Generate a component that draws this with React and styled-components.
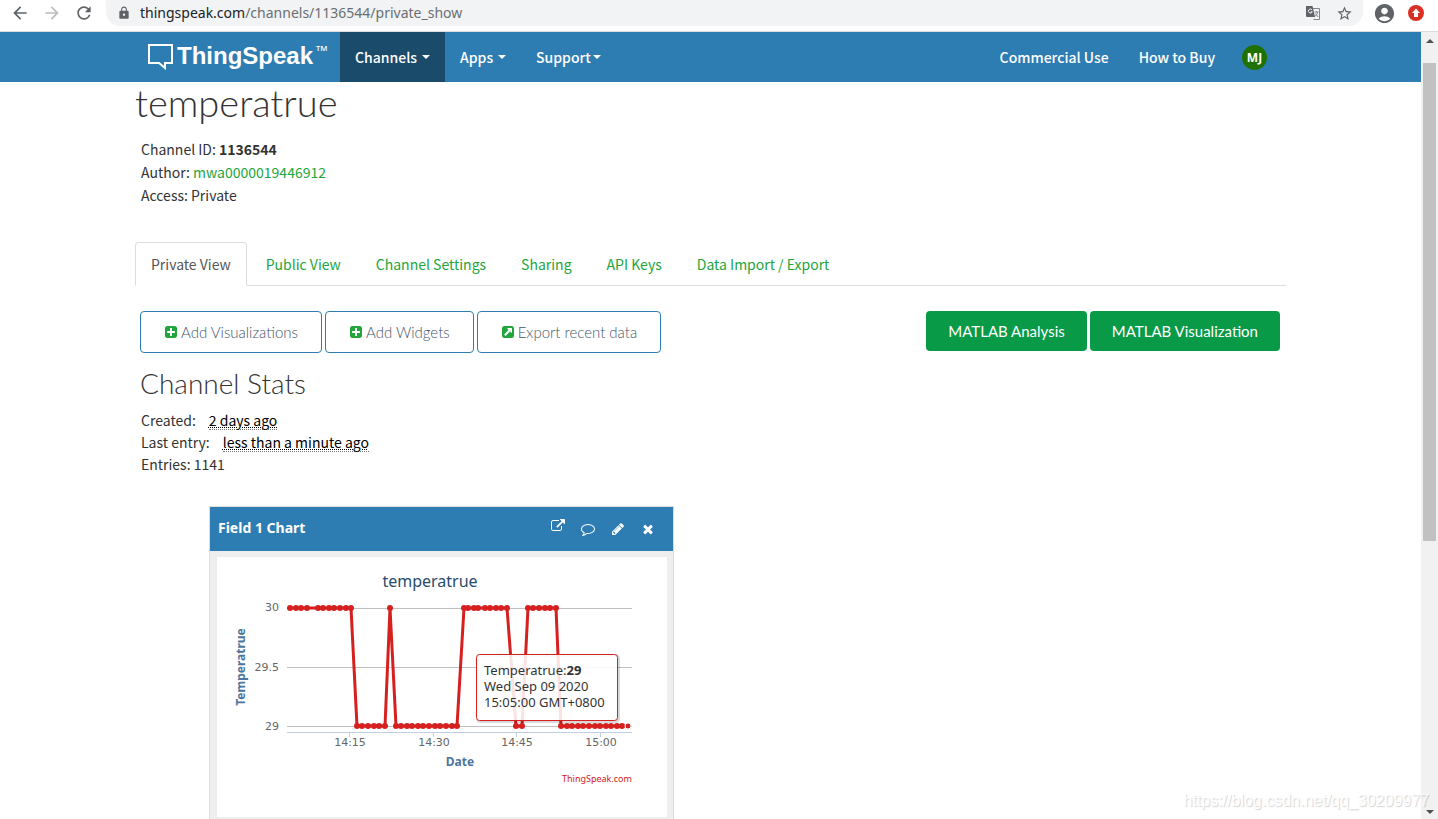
import React from "react";
import styled, { createGlobalStyle } from "styled-components";
import {
  MdAccountCircle,
  MdArrowBack,
  MdArrowForward,
  MdLock,
  MdRefresh,
  MdStarBorder,
} from "react-icons/md";

const GlobalStyle = createGlobalStyle`
  * {
    box-sizing: border-box;
  }
  body {
    margin: 0;
    background: #fff;
    color: #333;
    font-family: "Noto Sans CJK SC", "Noto Sans", sans-serif;
    font-size: 14px;
    line-height: 22px;
    overflow: hidden;
  }
  a {
    text-decoration: none;
  }
  button {
    border: 0;
    padding: 0;
    background: none;
    font: inherit;
    cursor: pointer;
  }
`;

const Shell = styled.div`
  position: relative;
  display: flex;
  flex-direction: column;
  height: 100vh;
`;

/* browser bar */
const Toolbar = styled.div`
  display: flex;
  align-items: center;
  flex: none;
  height: 32px;
  padding: 0 14px 5px 10px;
  border-bottom: 1px solid #dadce0;
`;

const ToolButton = styled.button`
  display: flex;
  margin-right: 12px;
  font-size: 20px;
  color: ${(props) => (props.$muted ? "#babcbe" : "#5f6368")};
`;

const AddressBar = styled.div`
  display: flex;
  align-items: center;
  flex: 1;
  align-self: stretch;
  gap: 9px;
  padding: 0 10px 0 11px;
  border-radius: 0 0 14px 14px;
  background: #f1f3f4;
  color: #5f6368;
`;

const Address = styled.div`
  flex: 1;
  font-family: "Noto Sans", sans-serif;
  font-size: 14px;
  color: #6b6f73;
  b {
    font-weight: 400;
    color: #202124;
  }
`;

const AddressIcons = styled.div`
  display: flex;
  align-items: center;
  gap: 15px;
`;

const Profile = styled.div`
  display: flex;
  align-items: center;
  gap: 12px;
  margin-left: 10px;
  color: #5f6368;
`;

const Viewport = styled.div`
  display: flex;
  flex: 1;
  min-height: 0;
`;

const Page = styled.div`
  flex: 1;
  min-width: 0;
  overflow: hidden;
`;

const ScrollBar = styled.div`
  display: flex;
  flex-direction: column;
  align-items: center;
  justify-content: space-between;
  width: 17px;
  padding: 7px 0 5px;
  background: #f1f1f1;
`;

const Track = styled.div`
  flex: 1;
  width: 13px;
  padding-top: 20px;
`;

const Thumb = styled.div`
  width: 13px;
  height: 64%;
  background: #c1c1c1;
`;

const ScrollArrow = styled.div`
  border: 4px solid transparent;
  border-top-width: ${(props) => (props.$down ? "4px" : "0")};
  border-bottom-width: ${(props) => (props.$down ? "0" : "4px")};
  border-${(props) => (props.$down ? "top" : "bottom")}-color: #505050;
`;

/* site header */
const Container = styled.div`
  width: 100%;
  max-width: 1151px;
  margin: 0 auto;
`;

const NavBar = styled.nav`
  background: #2e7db2;
`;

const NavInner = styled(Container)`
  display: flex;
  align-items: center;
  height: 50px;
  padding: 0 19px 0 13px;
`;

const Brand = styled.a`
  display: flex;
  align-items: center;
  gap: 4px;
  width: 192px;
  color: #fff;
  font: bold 24px/26px "Liberation Sans", Arial, sans-serif;
  span {
    display: flex;
    align-items: flex-start;
    gap: 2px;
    padding-bottom: 2px;
  }
  sup {
    font-size: 13px;
    font-weight: 400;
    line-height: 16px;
    vertical-align: baseline;
  }
`;

const NavLink = styled.a`
  display: flex;
  align-items: center;
  gap: ${(props) => props.$gap || "5px"};
  height: 50px;
  padding: 0 15px;
  background: ${(props) => (props.$active ? "#1b4b6b" : "transparent")};
  color: #fff;
  font-weight: 500;
  white-space: nowrap;
`;

const Caret = styled.i`
  border-top: 4px solid #fff;
  border-left: 4px solid transparent;
  border-right: 4px solid transparent;
`;

const NavRight = styled.div`
  display: flex;
  align-items: center;
  margin-left: auto;
`;

const Avatar = styled.button`
  width: 25px;
  height: 25px;
  margin-left: 12px;
  border-radius: 50%;
  background: #1f7100;
  color: #fff;
  font: bold 12px/25px "Noto Sans", sans-serif;
`;

/* channel */
const Title = styled.h1`
  margin: 0;
  font: 300 38px/40px Lato, sans-serif;
`;

const Meta = styled.div`
  padding: 16px 6px 0;
  line-height: 23px;
  p {
    margin: 0;
  }
  a {
    color: #22a63c;
  }
`;

const Tabs = styled.div`
  display: flex;
  gap: 3px;
  height: 44px;
  margin: 35px 0 25px;
  border-bottom: 1px solid #ddd;
`;

const Tab = styled.a`
  height: 44px;
  padding: 0 15px;
  border: 1px solid ${(props) => (props.$active ? "#ddd" : "transparent")};
  border-bottom-color: ${(props) => (props.$active ? "#fff" : "transparent")};
  border-radius: 4px 4px 0 0;
  color: ${(props) => (props.$active ? "#555" : "#22a63c")};
  line-height: 43px;
  white-space: nowrap;
`;

const Actions = styled.div`
  display: flex;
  align-items: flex-start;
  gap: 3px;
  padding: 0 6px 0 5px;
`;

const OutlineButton = styled.button`
  display: flex;
  align-items: center;
  gap: 3px;
  height: 42px;
  padding: 0 23px;
  border: 1px solid #2e7db2;
  border-radius: 4px;
  background: #fff;
  color: #46566b;
  font: 300 15px/20px Lato, sans-serif;
  white-space: nowrap;
  svg {
    fill: #22a63c;
  }
`;

const GreenButton = styled.button`
  height: 40px;
  padding: 0 22px;
  border-radius: 4px;
  background: #089a47;
  color: #fff;
  font: 400 15px/20px Lato, sans-serif;
  white-space: nowrap;
`;

const Spacer = styled.div`
  flex: 1;
`;

const SubTitle = styled.h2`
  margin: 15px 5px 11px;
  font: 300 28px/30px Lato, sans-serif;
`;

const Stats = styled.div`
  padding: 0 6px;
  p {
    display: flex;
    margin: 0;
  }
  abbr {
    height: 21px;
    margin-left: 13px;
    border-bottom: 1px dotted #777;
    color: #000;
    text-decoration: underline dotted 1px;
    text-underline-offset: 1px;
  }
`;

/* chart card */
const Card = styled.section`
  width: 465px;
  margin: 31px 0 0 74px;
  border: 1px solid #ddd;
  background: #eee;
`;

const CardHeader = styled.header`
  display: flex;
  align-items: center;
  gap: 16px;
  height: 44px;
  padding: 0 18px 0 8px;
  background: #2e7db2;
  h3 {
    flex: 1;
    margin: 0;
    padding-bottom: 2px;
    color: #fff;
    font: bold 14px/20px "Noto Sans", sans-serif;
  }
`;

const CardButton = styled.button`
  display: flex;
  padding-bottom: ${(props) => (props.$raised ? "7px" : "0")};
  svg {
    fill: #fff;
  }
`;

const CardBody = styled.div`
  padding: 6px;
  padding-left: 7px;
`;

const Chart = styled.svg`
  display: block;
  background: #fff;
  font-family: "DejaVu Sans", sans-serif;
`;

const Watermark = styled.div`
  position: absolute;
  right: 9px;
  bottom: 8px;
  color: #fff;
  font: 16px/20px "Liberation Sans", Arial, sans-serif;
  text-shadow: 1px 1px 1px rgba(0, 0, 0, 0.25);
  opacity: 0.7;
  pointer-events: none;
`;

const ICONS = {
  plus: "M1408 960v-128q0-26-19-45t-45-19h-320v-320q0-26-19-45t-45-19h-128q-26 0-45 19t-19 45v320h-320q-26 0-45 19t-19 45v128q0 26 19 45t45 19h320v320q0 26 19 45t45 19h128q26 0 45-19t19-45v-320h320q26 0 45-19t19-45zm256-544v960q0 119-84.5 203.5t-203.5 84.5h-960q-119 0-203.5-84.5t-84.5-203.5v-960q0-119 84.5-203.5t203.5-84.5h960q119 0 203.5 84.5t84.5 203.5z",
  exportSquare:
    "M1408 928v-480q0-26-19-45t-45-19h-480q-42 0-59 39-17 41 14 70l144 144-534 534q-19 19-19 45t19 45l102 102q19 19 45 19t45-19l534-534 144 144q18 19 45 19 12 0 25-5 39-17 39-59zm256-512v960q0 119-84.5 203.5t-203.5 84.5h-960q-119 0-203.5-84.5t-84.5-203.5v-960q0-119 84.5-203.5t203.5-84.5h960q119 0 203.5 84.5t84.5 203.5z",
  external:
    "M1408 928v320q0 119-84.5 203.5t-203.5 84.5h-832q-119 0-203.5-84.5t-84.5-203.5v-832q0-119 84.5-203.5t203.5-84.5h704q14 0 23 9t9 23v64q0 14-9 23t-23 9h-704q-66 0-113 47t-47 113v832q0 66 47 113t113 47h832q66 0 113-47t47-113v-320q0-14 9-23t23-9h64q14 0 23 9t9 23zm384-864v512q0 26-19 45t-45 19-45-19l-176-176-652 652q-10 10-23 10t-23-10l-114-114q-10-10-10-23t10-23l652-652-176-176q-19-19-19-45t19-45 45-19h512q26 0 45 19t19 45z",
  comment:
    "M896 384q-204 0-381.5 69.5t-282 187.5-104.5 255q0 112 71.5 213.5t201.5 175.5l87 50-27 96q-24 91-70 172 152-63 275-171l43-38 57 6q69 8 130 8 204 0 381.5-69.5t282-187.5 104.5-255-104.5-255-282-187.5-381.5-69.5zm896 512q0 174-120 321.5t-326 233-450 85.5q-70 0-145-8-198 175-460 242-49 14-114 22h-5q-15 0-27-10.5t-16-27.5v-1q-3-4-.5-12t2-10 4.5-9.5l6-9 7-8.5 8-9q7-8 31-34.5t34.5-38 31-39.5 32.5-51 27-59 26-76q-157-89-247.5-220t-90.5-281q0-174 120-321.5t326-233 450-85.5 450 85.5 326 233 120 321.5z",
  pencil:
    "M491 1536l91-91-235-235-91 91v107h128v128h107zm523-928q0-22-22-22-10 0-17 7l-542 542q-7 7-7 17 0 22 22 22 10 0 17-7l542-542q7-7 7-17zm-54-192l416 416-832 832h-416v-416zm683 96q0 53-37 90l-166 166-416-416 166-165q36-38 90-38 53 0 91 38l235 234q37 39 37 91z",
  times:
    "M1490 1322q0 40-28 68l-136 136q-28 28-68 28t-68-28l-294-294-294 294q-28 28-68 28t-68-28l-136-136q-28-28-28-68t28-68l294-294-294-294q-28-28-28-68t28-68l136-136q28-28 68-28t68 28l294 294 294-294q28-28 68-28t68 28l136 136q28 28 28 68t-28 68l-294 294 294 294q28 28 28 68z",
};

const Icon = ({ name, size = 14 }) => (
  <svg width={size} height={size} viewBox="0 0 1792 1792" aria-hidden="true">
    <path d={ICONS[name]} />
  </svg>
);

const TranslateIcon = () => (
  <svg width="16" height="16" viewBox="0 0 16 16" fill="none" aria-hidden="true">
    <path d="M8 3.5H14.5V14.5H8.5" stroke="#80868b" />
    <path d="M9.5 7H13.5M11.5 6V7M12.8 7C12.3 9 11 10.5 9.8 11.5M10.3 8.5L13.2 12" stroke="#80868b" />
    <path d="M1 1H7.5L10 12H2Q1 12 1 11Z" fill="#5f6368" />
    <path d="M7 4.8A2 2 0 1 0 7.3 6.8H5.6" stroke="#f1f3f4" />
  </svg>
);

const TABS = [
  "Private View",
  "Public View",
  "Channel Settings",
  "Sharing",
  "API Keys",
  "Data Import / Export",
];

const HIGH = 51;
const LOW = 169;

// runs of readings, x positions inside the plot
const RUNS = [
  [HIGH, [73, 79, 84, 90, 101, 106, 112, 117, 123, 129, 134]],
  [LOW, [140, 145, 151, 157, 162, 168]],
  [HIGH, [173]],
  [LOW, [179, 184, 190, 195, 201, 206, 212, 218, 223, 229, 235, 240]],
  [HIGH, [247, 251, 257, 261, 268, 273, 279, 284, 290]],
  [LOW, [299, 305]],
  [HIGH, [311, 316, 322, 328, 333, 339]],
  [LOW, [344, 350, 355, 361, 366, 372, 378, 383, 389, 394, 400, 405, 411]],
];

const POINTS = RUNS.flatMap(([y, xs]) => xs.map((x) => [x, y]));

const FieldChart = () => (
  <Chart width="450" height="260" viewBox="0 0 450 260" role="img" aria-label="temperatrue">
    <text x="213" y="30" textAnchor="middle" fontSize="16" fill="#274b6d" fontFamily="Noto Sans">
      temperatrue
    </text>

    <g stroke="#c0c0c0" shapeRendering="crispEdges">
      <path d="M70 51.5H415M70 110.5H415M70 169.5H415" />
      <path d="M70 175.5H415M132.5 175V180M216.5 175V180M299.5 175V180M383.5 175V180" stroke="#c0d0e0" />
    </g>

    <g fontSize="11" fill="#666">
      <g textAnchor="end">
        <text x="62" y="54">30</text>
        <text x="62" y="114">29.5</text>
        <text x="62" y="173">29</text>
      </g>
      <g textAnchor="middle">
        <text x="133" y="189">14:15</text>
        <text x="217" y="189">14:30</text>
        <text x="300" y="189">14:45</text>
        <text x="384" y="189">15:00</text>
      </g>
    </g>

    <g fontSize="12" fontWeight="bold" fill="#4d759e" textAnchor="middle" fontFamily="Noto Sans">
      <text x="243" y="209">Date</text>
      <text transform="translate(28 110) rotate(-90)">Temperatrue</text>
    </g>

    <polyline
      points={POINTS.map((p) => p.join(",")).join(" ")}
      fill="none"
      stroke="#d62020"
      strokeWidth="3"
      strokeLinejoin="round"
    />
    {POINTS.map(([x, y]) => (
      <circle key={x} cx={x} cy={y} r="3" fill="#d62020" />
    ))}
    <circle cx="411" cy={LOW} r="3" fill="#d62020" stroke="#fff" />

    <rect x="260.5" y="98.5" width="141" height="66" rx="3" fill="none" stroke="#000" strokeWidth="3" opacity="0.15" />
    <rect x="259.5" y="97.5" width="141" height="66" rx="3" fill="#fff" fillOpacity="0.87" stroke="#d62020" />
    <g fontSize="13" fill="#333" fontFamily="Noto Sans">
      <text x="267" y="118">
        Temperatrue:<tspan fontWeight="bold">29</tspan>
      </text>
      <text x="267" y="134">Wed Sep 09 2020</text>
      <text x="267" y="150">15:05:00 GMT+0800</text>
    </g>

    <text x="415" y="225" textAnchor="end" fontSize="9" fill="#d62020" fontFamily="Noto Sans">
      ThingSpeak.com
    </text>
  </Chart>
);

const App = () => {
  return (
    <Shell>
      <GlobalStyle />

      <Toolbar>
        <ToolButton aria-label="Back">
          <MdArrowBack />
        </ToolButton>
        <ToolButton aria-label="Forward" $muted>
          <MdArrowForward />
        </ToolButton>
        <ToolButton aria-label="Reload">
          <MdRefresh />
        </ToolButton>
        <AddressBar>
          <MdLock size={14} />
          <Address>
            <b>thingspeak.com</b>/channels/1136544/private_show
          </Address>
          <AddressIcons>
            <TranslateIcon />
            <MdStarBorder size={17} />
          </AddressIcons>
        </AddressBar>
        <Profile>
          <MdAccountCircle size={23} />
          <svg width="16" height="16" viewBox="0 0 16 16">
            <circle cx="8" cy="8" r="8" fill="#d93025" />
            <path d="M8 3.5l4 4.5H10v4H6V8H4z" fill="#fff" />
          </svg>
        </Profile>
      </Toolbar>

      <Viewport>
        <Page>
          <NavBar>
            <NavInner>
              <Brand href="#">
                <svg width="25" height="26" viewBox="0 0 25 26" fill="none" stroke="#fff" strokeWidth="2">
                  <path d="M1 1H24V19H17V24L11 19H1Z" />
                </svg>
                <span>
                  ThingSpeak<sup>™</sup>
                </span>
              </Brand>
              <NavLink href="#" $active>
                Channels <Caret />
              </NavLink>
              <NavLink href="#">
                Apps <Caret />
              </NavLink>
              <NavLink href="#" $gap="2px">
                Support <Caret />
              </NavLink>
              <NavRight>
                <NavLink href="#">Commercial Use</NavLink>
                <NavLink href="#">How to Buy</NavLink>
                <Avatar>MJ</Avatar>
              </NavRight>
            </NavInner>
          </NavBar>

          <Container>
            <Title>temperatrue</Title>
            <Meta>
              <p>
                Channel ID: <b>1136544</b>
              </p>
              <p>
                Author: <a href="#">mwa0000019446912</a>
              </p>
              <p>Access: Private</p>
            </Meta>

            <Tabs>
              {TABS.map((tab, i) => (
                <Tab key={tab} href="#" $active={i === 0}>
                  {tab}
                </Tab>
              ))}
            </Tabs>

            <Actions>
              <OutlineButton>
                <Icon name="plus" />
                Add Visualizations
              </OutlineButton>
              <OutlineButton>
                <Icon name="plus" />
                Add Widgets
              </OutlineButton>
              <OutlineButton>
                <Icon name="exportSquare" />
                Export recent data
              </OutlineButton>
              <Spacer />
              <GreenButton>MATLAB Analysis</GreenButton>
              <GreenButton>MATLAB Visualization</GreenButton>
            </Actions>

            <SubTitle>Channel Stats</SubTitle>
            <Stats>
              <p>
                Created: <abbr>2 days ago</abbr>
              </p>
              <p>
                Last entry: <abbr>less than a minute ago</abbr>
              </p>
              <p>Entries: 1141</p>
            </Stats>

            <Card>
              <CardHeader>
                <h3>Field 1 Chart</h3>
                <CardButton aria-label="Open in new window" $raised>
                  <Icon name="external" />
                </CardButton>
                <CardButton aria-label="Comment">
                  <Icon name="comment" />
                </CardButton>
                <CardButton aria-label="Edit">
                  <Icon name="pencil" />
                </CardButton>
                <CardButton aria-label="Close">
                  <Icon name="times" />
                </CardButton>
              </CardHeader>
              <CardBody>
                <FieldChart />
              </CardBody>
            </Card>
          </Container>
        </Page>

        <ScrollBar>
          <ScrollArrow />
          <Track>
            <Thumb />
          </Track>
          <ScrollArrow $down />
        </ScrollBar>
      </Viewport>

      <Watermark>https://blog.csdn.net/qq_30209977</Watermark>
    </Shell>
  );
};

export default App;
